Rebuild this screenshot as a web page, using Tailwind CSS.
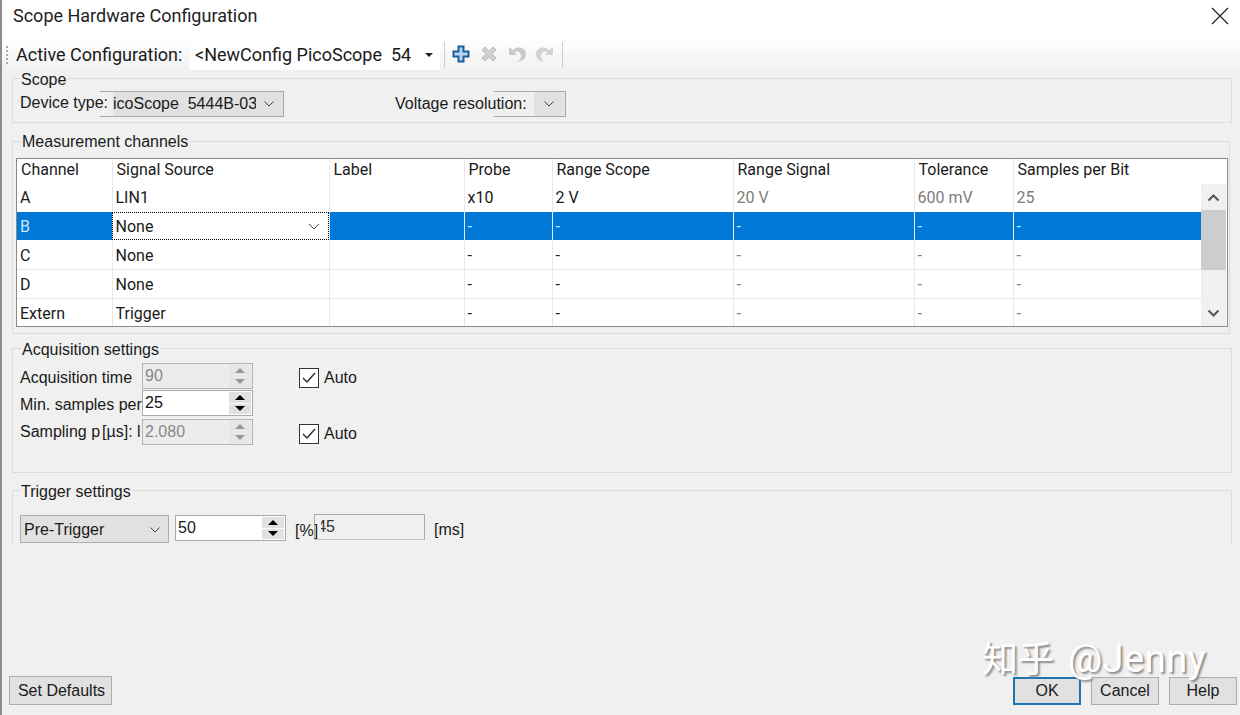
<!DOCTYPE html>
<html lang="en">
<head>
    <meta charset="UTF-8">
    <title>Scope Hardware Configuration</title>
    <script src="https://cdn.jsdelivr.net/npm/@tailwindcss/browser@4"></script>
</head>
<body class="bg-[#f0f0f0] overflow-hidden">
<div class="relative w-[1240px] h-[715px] flex flex-col border-l-2 border-[#8c8c8c] text-[#1a1a1a] font-['Liberation_Sans',sans-serif] text-[16px]">

    <!-- TITLE -->
    <header class="h-[38px] shrink-0 bg-white flex items-start justify-between pt-[4px] pl-[11px] pr-[11px]">
        <h1 class="font-['Roboto',sans-serif] text-[18px] leading-[24px] text-[#222]">Scope Hardware Configuration</h1>
        <svg class="w-[18px] h-[18px] mt-[3px]" viewBox="0 0 18 18" fill="none" stroke="#222" stroke-width="1.2"><path d="M1 1l16 16M17 1L1 17"/></svg>
    </header>

    <!-- TOOLBAR -->
    <div class="h-[34px] shrink-0 bg-gradient-to-b from-white to-[#f0f0f0] flex items-center pl-[4px]">
        <div class="w-0 h-[18px] border-l-2 border-dotted border-[#aaa] mr-[8px]"></div>
        <span class="font-['Roboto',sans-serif] text-[18px] leading-[24px] -mt-px w-[174px] shrink-0 whitespace-nowrap">Active Configuration:</span>
        <div class="w-[250px] h-[30px] bg-white flex items-center pl-[5px] pr-[6px] font-['Roboto',sans-serif] text-[18px] leading-[24px] whitespace-pre">
            <span class="w-[216px] -mt-px overflow-hidden">&lt;NewConfig PicoScope  5444B</span>
            <span class="ml-auto mr-[1px] w-0 h-0 border-x-[4px] border-x-transparent border-t-[4px] border-t-[#222]"></span>
        </div>
        <div class="ml-[4px] w-px h-[26px] bg-[#ccc]"></div>
        <div class="flex items-center gap-[8px] ml-[6px] -mt-[2px]">
            <svg class="w-[20px] h-[20px]" viewBox="0 0 20 20"><path d="M7.500 2.500h5v5h5v5h-5v5h-5v-5h-5v-5h5z" fill="#bcd6f2" stroke="#1f5c9e" stroke-width="2"/></svg>
            <svg class="w-[20px] h-[20px]" viewBox="0 0 20 20"><path d="M3 6l3-3 4 4 4-4 3 3-4 4 4 4-3 3-4-4-4 4-3-3 4-4z" fill="#cfcfcf" stroke="#bcbcbc"/></svg>
            <svg class="w-[20px] h-[20px]" viewBox="0 0 20 20"><path d="M2 3v8h8L7.500 8.500C10 6.500 14 8 14 12c0 2-1 4-3 6 5-1 8-4 8-8 0-6-8-9-13-4z" fill="#c9c9c9"/></svg>
            <svg class="w-[20px] h-[20px]" viewBox="0 0 20 20"><path d="M18 3v8h-8l2.500-2.500C10 6.500 6 8 6 12c0 2 1 4 3 6-5-1-8-4-8-8 0-6 8-9 13-4z" fill="#d2d2d2"/></svg>
        </div>
        <div class="ml-[7px] w-px h-[26px] bg-[#ccc]"></div>
    </div>

    <!-- SCOPE -->
    <section class="relative shrink-0 ml-[10px] mt-[6px] w-[1220px] h-[45px] border border-[#dcdcdc] flex items-center pl-[7px] pt-[6px]">
        <span class="absolute left-[7px] -top-[8px] bg-[#f0f0f0] px-px leading-[18px]">Scope</span>
        <span class="w-[80px] -mt-[2px] shrink-0 whitespace-nowrap z-10">Device type:</span>
        <div class="w-[184px] h-[26px] bg-[linear-gradient(to_right,#f0f0f0_13px,#e1e1e1_13px)] border border-l-0 border-[#a9a9a9] flex items-center pl-[13px] whitespace-pre">
            <span class="w-[143px] overflow-hidden">icoScope  5444B-03</span>
            <svg class="w-[12px] h-[8px] ml-[7px]" viewBox="0 0 12 8" fill="none" stroke="#444"><path d="M1.500 1.500L6 6l4.500-4.500"/></svg>
        </div>
        <span class="ml-[111px] mt-px w-[99px] overflow-visible whitespace-nowrap z-10">Voltage resolution:</span>
        <div class="w-[72px] h-[26px] bg-[linear-gradient(to_right,#f0f0f0_40px,#e1e1e1_40px)] border border-l-0 border-[#a9a9a9] flex items-center justify-end pr-[10px]">
            <svg class="w-[12px] h-[8px]" viewBox="0 0 12 8" fill="none" stroke="#444"><path d="M1.500 1.500L6 6l4.500-4.500"/></svg>
        </div>
    </section>

    <!-- MEASUREMENT CHANNELS -->
    <section class="relative shrink-0 ml-[10px] mt-[18px] w-[1218px] h-[193px] border border-[#dcdcdc] pl-[3px] pt-[16px]">
        <span class="absolute left-[8px] -top-[9px] bg-[#f0f0f0] px-px leading-[18px]">Measurement channels</span>
        <div class="w-[1212px] h-[169px] border border-[#8a8a8a] bg-white flex font-['Roboto',sans-serif] text-[16px] leading-[20px]">
            <table class="table-fixed border-collapse w-[1184px] h-fit">
                <colgroup>
                    <col class="w-[95px]"><col class="w-[217px]"><col class="w-[135px]"><col class="w-[88px]"><col class="w-[181px]"><col class="w-[181px]"><col class="w-[99px]"><col class="w-[188px]">
                </colgroup>
                <thead>
                    <tr class="h-[24px] text-left [&>th]:font-normal [&>th]:align-top [&>th]:pt-px [&>th]:pl-[4px] [&>th]:border-l [&>th]:border-[#e8e8e8]">
                        <th class="border-l-0!">Channel</th><th>Signal Source</th><th>Label</th><th>Probe</th><th>Range Scope</th><th>Range Signal</th><th>Tolerance</th><th>Samples per Bit</th>
                    </tr>
                </thead>
                <tbody class="[&_td]:pl-[3px] [&_td]:border-l [&_td]:border-[#e8e8e8] [&_td:first-child]:border-l-0">
                    <tr class="h-[29px] [&>td]:pt-px">
                        <td>A</td><td>LIN1</td><td></td><td>x10</td><td>2 V</td><td class="text-[#7d7d7d]">20 V</td><td class="text-[#7d7d7d]">600 mV</td><td class="text-[#7d7d7d]">25</td>
                    </tr>
                    <tr class="h-[28px] bg-[#0078d7] text-[#cfe6fa] [&>td]:pt-[2px]">
                        <td>B</td>
                        <td class="p-0! bg-white text-[#1a1a1a] outline-1 outline-dotted outline-black -outline-offset-1">
                            <div class="flex items-center justify-between pl-[3px] pr-[9px] pt-[2px]">None
                                <svg class="w-[12px] h-[8px]" viewBox="0 0 12 8" fill="none" stroke="#444"><path d="M1 1l5 5 5-5"/></svg>
                            </div>
                        </td>
                        <td></td><td>-</td><td>-</td><td>-</td><td>-</td><td>-</td>
                    </tr>
                    <tr class="h-[29px] border-b border-[#e8e8e8] [&>td]:pt-[3px]">
                        <td>C</td><td>None</td><td></td><td>-</td><td>-</td><td class="text-[#7d7d7d]">-</td><td class="text-[#7d7d7d]">-</td><td class="text-[#7d7d7d]">-</td>
                    </tr>
                    <tr class="h-[29px] border-b border-[#e8e8e8] [&>td]:pt-[3px]">
                        <td>D</td><td>None</td><td></td><td>-</td><td>-</td><td class="text-[#7d7d7d]">-</td><td class="text-[#7d7d7d]">-</td><td class="text-[#7d7d7d]">-</td>
                    </tr>
                    <tr class="h-[28px] [&>td]:pt-[4px]">
                        <td>Extern</td><td>Trigger</td><td></td><td>-</td><td>-</td><td class="text-[#7d7d7d]">-</td><td class="text-[#7d7d7d]">-</td><td class="text-[#7d7d7d]">-</td>
                    </tr>
                </tbody>
            </table>
            <!-- scrollbar -->
            <div class="w-[25px] mt-[25px] mb-0 bg-[#f0f0f0] flex flex-col items-center">
                <div class="h-[26px] w-full flex items-center justify-center">
                    <svg class="w-[13px] h-[9px]" viewBox="0 0 13 9" fill="none" stroke="#555" stroke-width="2"><path d="M1.500 7.500l5-5 5 5"/></svg>
                </div>
                <div class="h-[60px] w-full bg-[#cdcdcd]"></div>
                <div class="flex-1 w-full flex items-end justify-center pb-[8px]">
                    <svg class="w-[13px] h-[9px]" viewBox="0 0 13 9" fill="none" stroke="#555" stroke-width="2"><path d="M1.500 1.500l5 5 5-5"/></svg>
                </div>
            </div>
        </div>
    </section>

    <!-- ACQUISITION SETTINGS -->
    <section class="relative shrink-0 ml-[10px] mt-[14px] w-[1220px] h-[125px] border border-[#dcdcdc] pl-[7px] pt-[14px] flex flex-col">
        <span class="absolute left-[8px] -top-[8px] bg-[#f0f0f0] px-px leading-[18px]">Acquisition settings</span>

        <div class="flex items-center h-[26px]">
            <span class="w-[122px] mt-[4px] shrink-0 whitespace-nowrap overflow-hidden">Acquisition time</span>
            <div class="w-[111px] h-[26px] bg-[#ececec] border border-[#b4b4b4] flex items-center justify-between pl-[2px] pr-[1px] text-[#888]">
                90
                <div class="w-[22px] h-[22px] flex flex-col gap-px">
                    <div class="flex-1 bg-[#e6e6e6] flex items-center justify-center"><span class="w-0 h-0 border-x-[5px] border-x-transparent border-b-[5px] border-b-[#999]"></span></div>
                    <div class="flex-1 bg-[#e6e6e6] flex items-center justify-center"><span class="w-0 h-0 border-x-[5px] border-x-transparent border-t-[5px] border-t-[#999]"></span></div>
                </div>
            </div>
            <label class="ml-[46px] mt-[4px] flex items-center gap-[5px]">
                <span class="w-[20px] h-[20px] bg-white border border-[#333] flex items-center justify-center"><svg class="w-[14px] h-[12px]" viewBox="0 0 14 12" fill="none" stroke="#333" stroke-width="1.500"><path d="M1 6l4 4 8-9"/></svg></span>
                Auto
            </label>
        </div>

        <div class="flex items-center h-[26px] mt-px">
            <span class="w-[122px] mt-[4px] shrink-0 whitespace-nowrap overflow-hidden">Min. samples per bit</span>
            <div class="w-[111px] h-[26px] bg-white border border-[#a9a9a9] flex items-center justify-between pl-[2px] pr-[1px] text-[#111]">
                25
                <div class="w-[22px] h-[22px] flex flex-col gap-px">
                    <div class="flex-1 bg-[#e1e1e1] flex items-center justify-center"><span class="w-0 h-0 border-x-[5px] border-x-transparent border-b-[5px] border-b-black"></span></div>
                    <div class="flex-1 bg-[#e1e1e1] flex items-center justify-center"><span class="w-0 h-0 border-x-[5px] border-x-transparent border-t-[5px] border-t-black"></span></div>
                </div>
            </div>
        </div>

        <div class="flex items-center h-[26px] mt-[3px]">
            <span class="w-[122px] shrink-0 whitespace-nowrap overflow-hidden">Sampling p<span class="inline-block w-[2px]"></span>[µs]: l</span>
            <div class="w-[111px] h-[26px] bg-[#ececec] border border-[#b4b4b4] flex items-center justify-between pl-[2px] pr-[1px] text-[#888]">
                2.080
                <div class="w-[22px] h-[22px] flex flex-col gap-px">
                    <div class="flex-1 bg-[#e6e6e6] flex items-center justify-center"><span class="w-0 h-0 border-x-[5px] border-x-transparent border-b-[5px] border-b-[#999]"></span></div>
                    <div class="flex-1 bg-[#e6e6e6] flex items-center justify-center"><span class="w-0 h-0 border-x-[5px] border-x-transparent border-t-[5px] border-t-[#999]"></span></div>
                </div>
            </div>
            <label class="ml-[46px] mt-[3px] flex items-center gap-[5px]">
                <span class="w-[20px] h-[20px] bg-white border border-[#333] flex items-center justify-center"><svg class="w-[14px] h-[12px]" viewBox="0 0 14 12" fill="none" stroke="#333" stroke-width="1.500"><path d="M1 6l4 4 8-9"/></svg></span>
                Auto
            </label>
        </div>
    </section>

    <!-- TRIGGER SETTINGS -->
    <section class="relative shrink-0 ml-[10px] mt-[17px] w-[1220px] h-[55px] border-t border-l border-r border-[#dcdcdc] pl-[7px] pt-[24px] flex items-start">
        <span class="absolute left-[7px] -top-[8px] bg-[#f0f0f0] px-px leading-[18px]">Trigger settings</span>
        <div class="w-[149px] h-[28px] bg-[#e1e1e1] border border-[#adadad] flex items-center justify-between pl-[3px] pr-[7px] pt-px">
            Pre-Trigger
            <svg class="w-[12px] h-[8px]" viewBox="0 0 12 8" fill="none" stroke="#444"><path d="M1.500 1.500L6 6l4.500-4.500"/></svg>
        </div>
        <div class="ml-[6px] w-[111px] h-[26px] bg-white border border-[#a9a9a9] flex items-center justify-between pl-[2px] pr-px">
            50
            <div class="w-[22px] h-[22px] flex flex-col gap-px">
                <div class="flex-1 bg-[#e1e1e1] flex items-center justify-center"><span class="w-0 h-0 border-x-[5px] border-x-transparent border-b-[5px] border-b-black"></span></div>
                <div class="flex-1 bg-[#e1e1e1] flex items-center justify-center"><span class="w-0 h-0 border-x-[5px] border-x-transparent border-t-[5px] border-t-black"></span></div>
            </div>
        </div>
        <span class="ml-[9px] mt-[4px] w-[20px] whitespace-nowrap">[%]</span>
        <div class="w-[111px] h-[26px] -mt-px border border-[#a9a9a9] border-b-[#c4c4c4] flex items-center pl-[6px] -ml-px">
            <div class="w-[14px] overflow-hidden flex justify-end text-[#333]">45</div>
        </div>
        <span class="ml-[9px] mt-[3px]">[ms]</span>
    </section>

    <!-- FOOTER -->
    <footer class="mt-auto mb-[10px] flex items-end justify-between pl-[7px] pr-[1px]">
        <button class="w-[103px] h-[29px] bg-[#e1e1e1] border border-[#adadad] pl-[2px]">Set Defaults</button>
        <div class="flex gap-[10px] mr-[2px]">
            <button class="w-[68px] h-[28px] bg-[#e1e1e1] border-2 border-[#1a76b0]">OK</button>
            <button class="w-[68px] h-[28px] bg-[#e1e1e1] border border-[#adadad]">Cancel</button>
            <button class="w-[68px] h-[28px] bg-[#e1e1e1] border border-[#adadad]">Help</button>
        </div>
    </footer>

    <!-- watermark -->
    <div class="absolute left-[980px] top-[634px] font-['Roboto','Noto_Sans_CJK_SC',sans-serif] text-[36px] leading-[50px] whitespace-nowrap text-white [text-shadow:2px_2px_2px_#8c8c8c]">知乎 <span class="text-[38px] ml-[5px] tracking-[0.5px]">@Jenny</span></div>
</div>
</body>
</html>
